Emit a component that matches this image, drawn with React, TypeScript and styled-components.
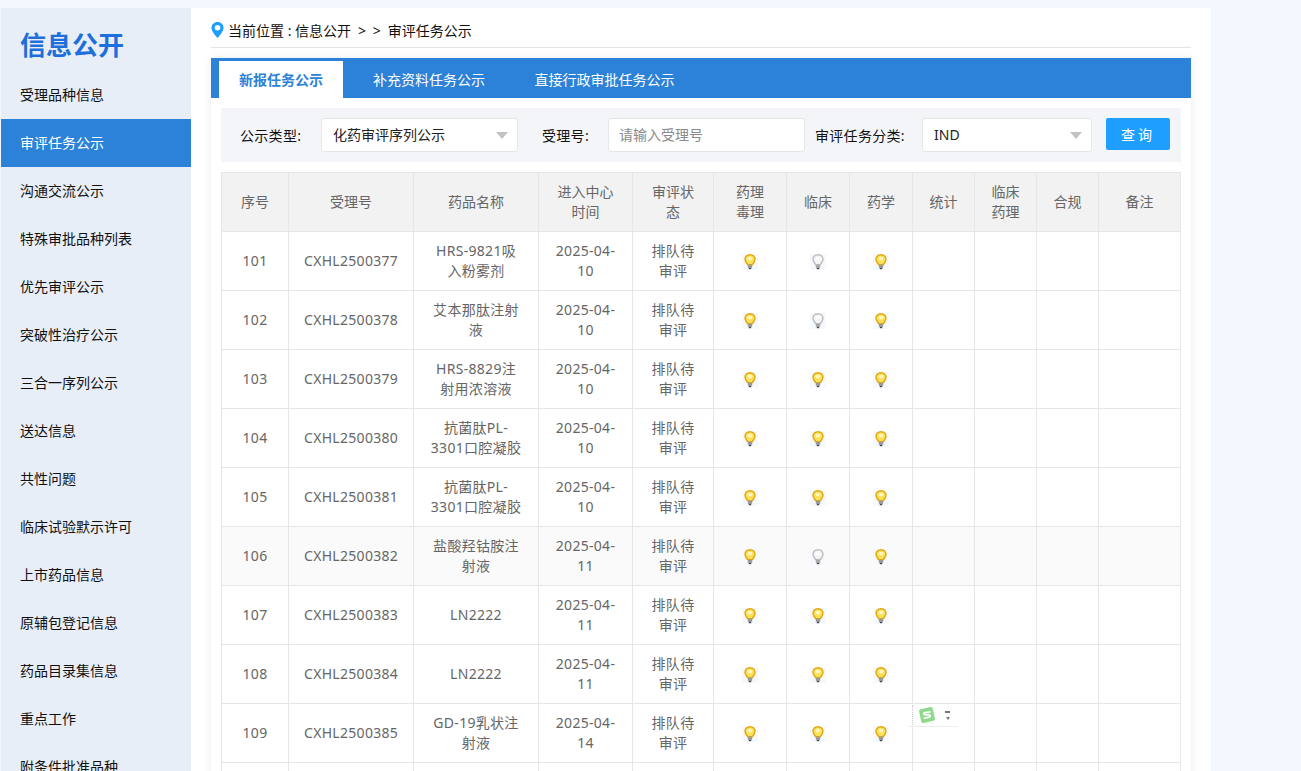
import React from "react"
import styled, { createGlobalStyle } from "styled-components"

const FONT = `"Noto Sans", "Noto Sans CJK SC", sans-serif`

const GlobalStyle = createGlobalStyle`
  html, body {
    margin: 0;
    padding: 0;
    height: 771px;
    overflow: hidden;
    background: #f3f7fe;
  }
  * { box-sizing: border-box; }
`

const Page = styled.div`
  display: flex;
  align-items: flex-start;
  width: 1301px;
  height: 771px;
  overflow: hidden;
  padding: 8px 0 0 1px;
  font-family: ${FONT};
`
const Sidebar = styled.aside`
  flex: none;
  width: 190px;
  height: 800px;
  background: #e8eef7;
`
const SideTitle = styled.div`
  height: 63px;
  padding: 19px 0 0 19px;
  font-size: 26px;
  line-height: 36px;
  font-weight: 700;
  color: #1e6fdb;
`
const SideItem = styled.div<{ $active?: boolean }>`
  height: 48px;
  padding-left: 19px;
  font-size: 14px;
  line-height: 48px;
  color: ${(p) => (p.$active ? "#fff" : "#111")};
  background: ${(p) => (p.$active ? "#2b82d8" : "transparent")};
`
const Main = styled.main`
  flex: none;
  width: 1020px;
  height: 800px;
  padding: 0 20px;
  background: #fff;
`
const Crumbs = styled.div`
  display: flex;
  align-items: center;
  gap: 4px;
  height: 40px;
  padding-top: 5px;
  border-bottom: 1px solid #e4e4e4;
  font-size: 14px;
  color: #111;
`
const CrumbSep = styled.span`
  margin: 0 7px;
  word-spacing: 3px;
`
const Panel = styled.section`
  margin-top: 10px;
  box-shadow: 0 0 8px rgba(60, 90, 140, 0.12);
  height: 760px;
`
const Tabs = styled.div`
  display: flex;
  height: 40px;
  padding: 3px 0 0 8px;
  background: #2b82d8;
`
const Tab = styled.div<{ $active?: boolean; $w: number }>`
  width: ${(p) => p.$w}px;
  text-align: center;
  font-size: 14px;
  line-height: 37px;
  font-weight: ${(p) => (p.$active ? 700 : 400)};
  color: ${(p) => (p.$active ? "#2b82d8" : "#fff")};
  background: ${(p) => (p.$active ? "#fff" : "transparent")};
`
const PanelBody = styled.div`
  padding: 10px 10px 0;
`
const Filter = styled.div`
  display: flex;
  align-items: center;
  height: 54px;
  padding-left: 19px;
  background: #f4f5f9;
  font-size: 14px;
  color: #111;
`
const FilterLabel = styled.label<{ $w: number; $pad?: number }>`
  flex: none;
  width: ${(p) => p.$w}px;
  padding-left: ${(p) => p.$pad || 0}px;
  letter-spacing: 0.3px;
`
const Field = styled.div<{ $w: number; $muted?: boolean }>`
  flex: none;
  position: relative;
  width: ${(p) => p.$w}px;
  height: 34px;
  padding-left: ${(p) => (p.$muted ? 10 : 11)}px;
  line-height: 32px;
  background: #fff;
  border: 1px solid #e6e6e6;
  border-radius: 3px;
  color: ${(p) => (p.$muted ? "#8a8a8a" : "#222")};
`
const Caret = styled.span`
  position: absolute;
  right: 9px;
  top: 13px;
  border-style: solid;
  border-width: 7px 6px 0;
  border-color: #c2c2c2 transparent transparent;
`
const QueryButton = styled.button`
  flex: none;
  align-self: flex-start;
  width: 64px;
  height: 32px;
  margin: 10px 0 0 14px;
  padding: 0;
  border: 0;
  border-radius: 2px;
  background: #1e9fff;
  color: #fff;
  font-family: ${FONT};
  font-size: 14px;
  letter-spacing: 3px;
`
const Table = styled.table`
  width: 959px;
  margin-top: 10px;
  border-collapse: collapse;
  table-layout: fixed;
  font-size: 14px;
  line-height: 20px;
  color: #666;
`
const Th = styled.th`
  height: 59px;
  padding: 9px 15px;
  border: 1px solid #e6e6e6;
  background: #f2f2f2;
  font-weight: 400;
  text-align: center;
`
const Row = styled.tr<{ $hover?: boolean }>`
  background: ${(p) => (p.$hover ? "#fafafa" : "#fff")};
`
const Td = styled.td`
  height: 59px;
  padding: 9px 15px;
  border: 1px solid #e6e6e6;
  text-align: center;
  letter-spacing: 0.3px;
`
const NameTd = styled(Td)`
  padding: 9px 16px;
`
const BulbBox = styled.div`
  width: 16px;
  height: 16px;
  margin: 2px auto 0;
  background: #f6f9fe;
`
const BulbSvg = styled.svg`
  display: block;
`
const WpsWidget = styled.div`
  position: absolute;
  left: 908px;
  top: 704px;
  display: flex;
  align-items: center;
  gap: 9px;
  width: 50px;
  height: 23px;
  padding-left: 10px;
  border-bottom: 1px solid #eeeeee;
  background: #fff;
  &::before {
    content: "";
    position: absolute;
    left: 4px;
    top: 1px;
    bottom: 1px;
    border-left: 1px dotted #c8c8c8;
  }
`
const WpsArrows = styled.div`
  display: flex;
  flex-direction: column;
  align-items: center;
  gap: 4px;
`
const WpsDash = styled.span`
  width: 5px;
  height: 2px;
  background: #777;
`
const WpsDown = styled.span`
  border-style: solid;
  border-width: 3px 2.5px 0;
  border-color: #777 transparent transparent;
`

const Pin = () => (
  <svg width="13" height="18" viewBox="0 0 14 18">
    <path d="M7 0.5C3.3 0.5 0.5 3.3 0.5 6.8 0.5 11 7 17.5 7 17.5S13.5 11 13.5 6.8C13.5 3.3 10.7 0.5 7 0.5Z" fill="#1e9fff" />
    <circle cx="7" cy="6.6" r="3" fill="#fff" />
  </svg>
)

const Bulb = ({ on }: { on: boolean }) => (
  <BulbBox>
    <BulbSvg width="16" height="16" viewBox="0 0 16 16">
      <path
        d="M8 0.7C5 0.7 3 2.8 3 5.3 3 7.6 4.7 8.7 5.5 10.6L10.5 10.6C11.3 8.7 13 7.6 13 5.3 13 2.8 11 0.7 8 0.7Z"
        fill={on ? "#fbe05c" : "#f4f4f4"}
        stroke={on ? "#e3a70a" : "#bdbdbd"}
        strokeWidth="1.4"
      />
      <ellipse cx="8" cy="4.6" rx="2.6" ry="1.8" fill={on ? "#fff6c0" : "#ffffff"} />
      <rect x="5.8" y="10.8" width="4.4" height="3" fill={on ? "#9a9a9a" : "#a8a8a8"} />
      <rect x="6.8" y="13.8" width="2.4" height="1.4" fill="#444" />
    </BulbSvg>
  </BulbBox>
)

const menu = [
  "受理品种信息", "审评任务公示", "沟通交流公示", "特殊审批品种列表", "优先审评公示",
  "突破性治疗公示", "三合一序列公示", "送达信息", "共性问题", "临床试验默示许可",
  "上市药品信息", "原辅包登记信息", "药品目录集信息", "重点工作", "附条件批准品种",
]

const columns: [React.ReactNode, number][] = [
  ["序号", 67], ["受理号", 125], ["药品名称", 125], ["进入中心时间", 94], ["审评状态", 81],
  [<>药理<br />毒理</>, 73], ["临床", 63], ["药学", 63], ["统计", 62], ["临床药理", 62], ["合规", 62], ["备注", 82],
]

// 第二个灯（临床）不亮的行在 dim 里标记
const rows = [
  { no: 101, code: "CXHL2500377", name: "HRS-9821吸入粉雾剂", date: "2025-04-10", dim: true },
  { no: 102, code: "CXHL2500378", name: "艾本那肽注射液", date: "2025-04-10", dim: true },
  { no: 103, code: "CXHL2500379", name: "HRS-8829注射用浓溶液", date: "2025-04-10" },
  { no: 104, code: "CXHL2500380", name: "抗菌肽PL-\u200b3301口腔凝胶", date: "2025-04-10" },
  { no: 105, code: "CXHL2500381", name: "抗菌肽PL-\u200b3301口腔凝胶", date: "2025-04-10" },
  { no: 106, code: "CXHL2500382", name: "盐酸羟钴胺注射液", date: "2025-04-11", dim: true, hover: true },
  { no: 107, code: "CXHL2500383", name: "LN2222", date: "2025-04-11" },
  { no: 108, code: "CXHL2500384", name: "LN2222", date: "2025-04-11" },
  { no: 109, code: "CXHL2500385", name: "GD-19乳状注射液", date: "2025-04-14" },
  { no: 110, code: "CXHL2500386", name: "GD-19乳状注射液", date: "2025-04-14" },
]

const App = () => {
  return (
    <>
      <GlobalStyle />
      <Page>
        <Sidebar>
          <SideTitle>信息公开</SideTitle>
          {menu.map((m, i) => (
            <SideItem key={m} $active={i === 1}>{m}</SideItem>
          ))}
        </Sidebar>
        <Main>
          <Crumbs>
            <Pin />
            <span>当前位置 : 信息公开<CrumbSep>&gt; &gt;</CrumbSep>审评任务公示</span>
          </Crumbs>
          <Panel>
            <Tabs>
              <Tab $active $w={124}>新报任务公示</Tab>
              <Tab $w={172}>补充资料任务公示</Tab>
              <Tab $w={179}>直接行政审批任务公示</Tab>
            </Tabs>
            <PanelBody>
              <Filter>
                <FilterLabel $w={81}>公示类型:</FilterLabel>
                <Field $w={197}>化药审评序列公示<Caret /></Field>
                <FilterLabel $w={90} $pad={24}>受理号:</FilterLabel>
                <Field $w={197} $muted>请输入受理号</Field>
                <FilterLabel $w={117} $pad={10}>审评任务分类:</FilterLabel>
                <Field $w={170}>IND<Caret /></Field>
                <QueryButton>查询</QueryButton>
              </Filter>
              <Table>
                <colgroup>
                  {columns.map(([, w], i) => <col key={i} width={w} />)}
                </colgroup>
                <thead>
                  <tr>
                    {columns.map(([t], i) => <Th key={i}>{t}</Th>)}
                  </tr>
                </thead>
                <tbody>
                  {rows.map((r) => (
                    <Row key={r.no} $hover={r.hover}>
                      <Td>{r.no}</Td>
                      <Td>{r.code}</Td>
                      <NameTd>{r.name}</NameTd>
                      <Td>{r.date}</Td>
                      <Td>排队待审评</Td>
                      <Td><Bulb on /></Td>
                      <Td><Bulb on={!r.dim} /></Td>
                      <Td><Bulb on /></Td>
                      <Td />
                      <Td />
                      <Td />
                      <Td />
                    </Row>
                  ))}
                </tbody>
              </Table>
            </PanelBody>
          </Panel>
        </Main>
        <WpsWidget>
          <svg width="18" height="18" viewBox="0 0 18 18">
            <rect x="2" y="2" width="14" height="14" rx="2" fill="#8fd98b" transform="rotate(-12 9 9)" />
            <path d="M12.6 5.6L6.4 6.8C5.2 7.2 5.6 8.6 6.8 8.7L11.2 8.9C12.6 9.2 12.4 10.9 11.2 11.1L5.6 12.3" fill="none" stroke="#fff" strokeWidth="1.8" />
          </svg>
          <WpsArrows>
            <WpsDash />
            <WpsDown />
          </WpsArrows>
        </WpsWidget>
      </Page>
    </>
  )
}
export default App
